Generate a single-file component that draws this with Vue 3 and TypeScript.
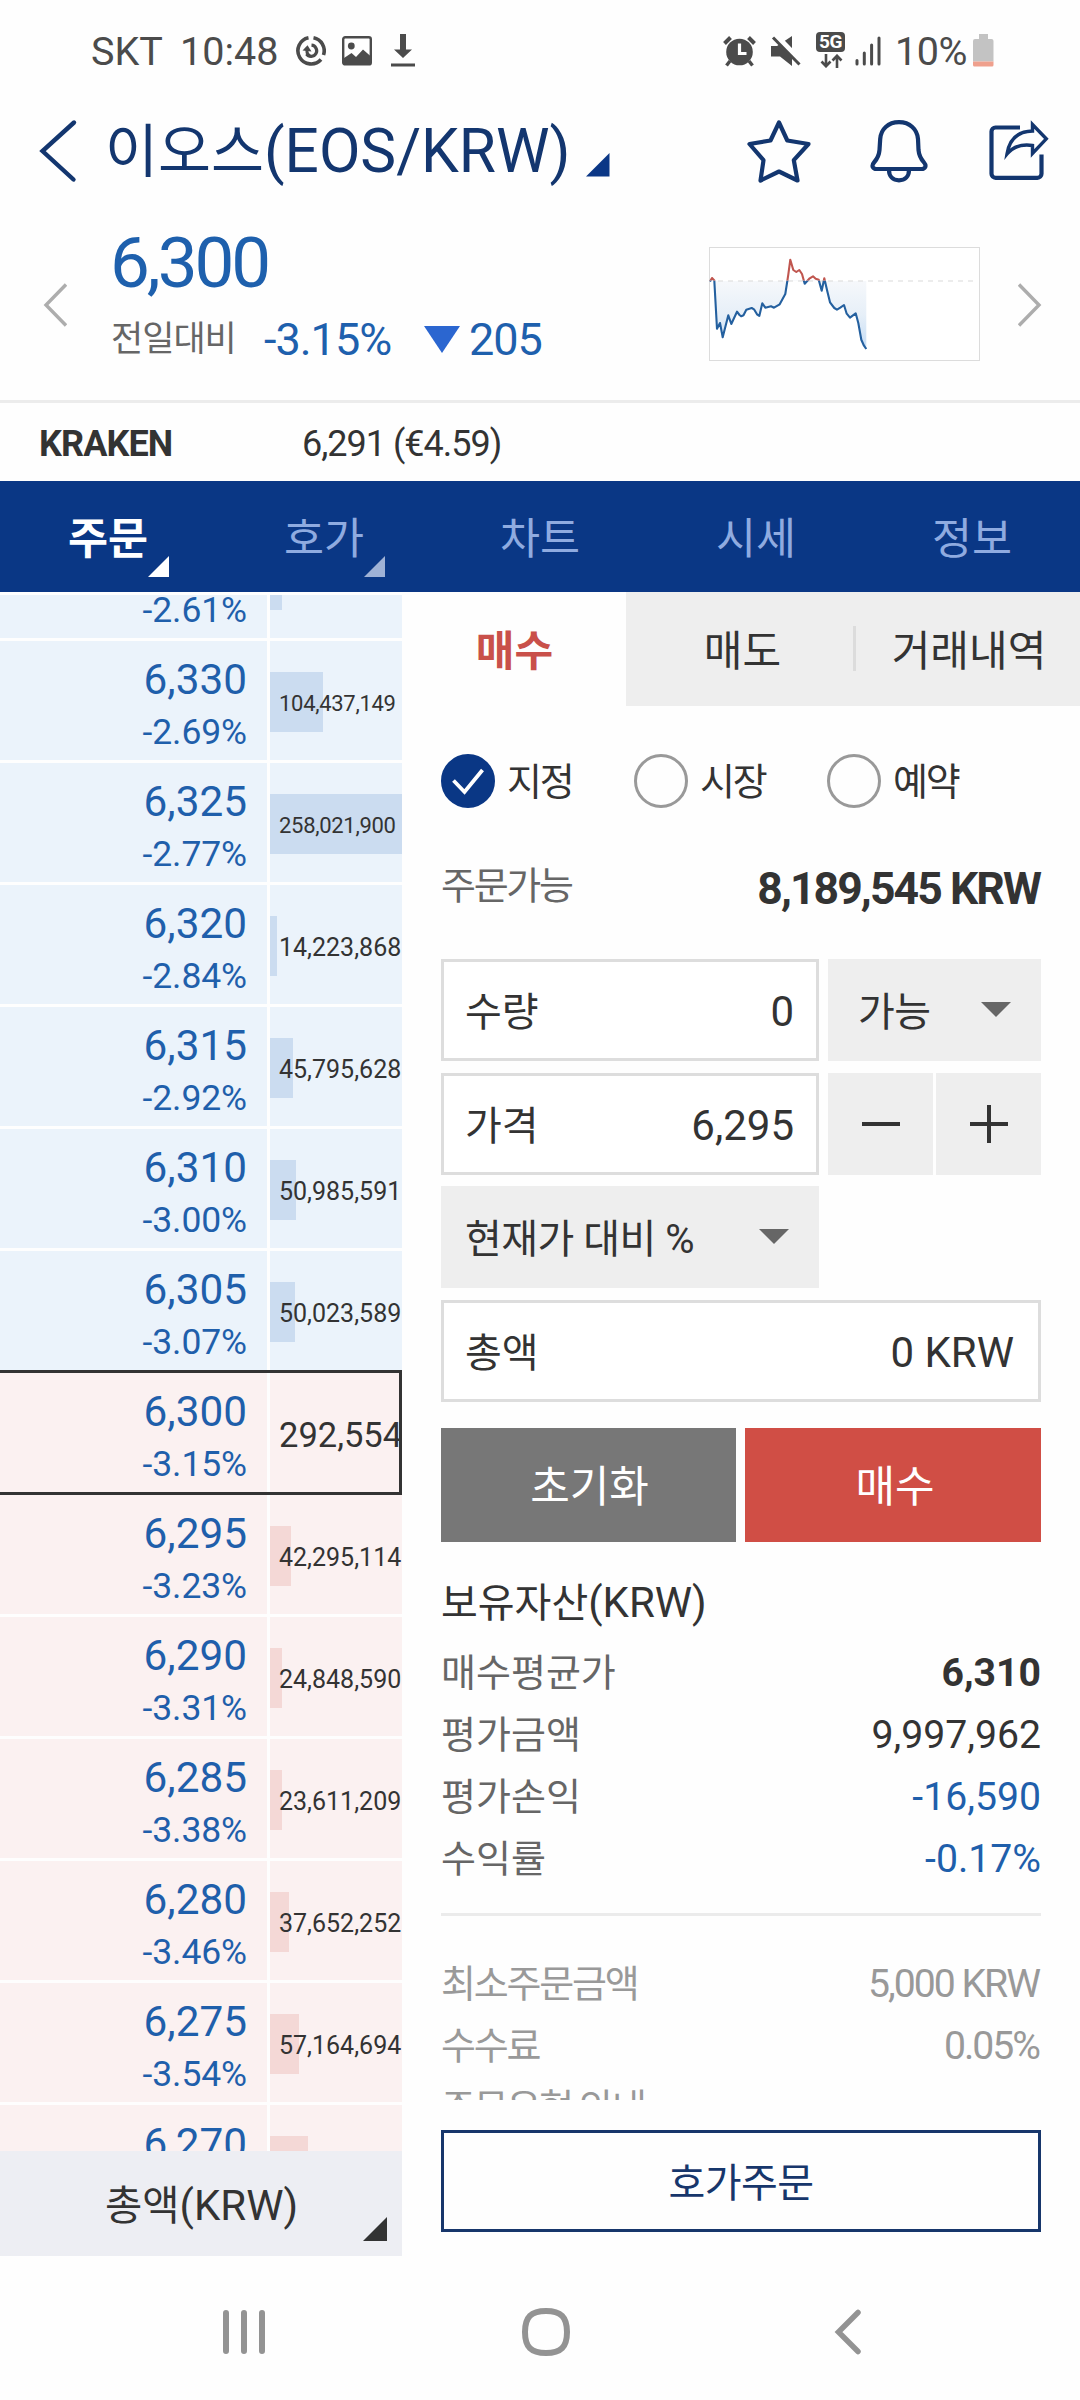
<script setup lang="ts">
interface Level {
  price?: string
  rate?: string
  volume: number
  label?: boolean
  last?: boolean
  side: 'ask' | 'bid'
}

const levels: Level[] = [
  { rate: '-2.61%', volume: 23900000, label: false, side: 'ask' },
  { price: '6,330', rate: '-2.69%', volume: 104437149, side: 'ask' },
  { price: '6,325', rate: '-2.77%', volume: 258021900, side: 'ask' },
  { price: '6,320', rate: '-2.84%', volume: 14223868, side: 'ask' },
  { price: '6,315', rate: '-2.92%', volume: 45795628, side: 'ask' },
  { price: '6,310', rate: '-3.00%', volume: 50985591, side: 'ask' },
  { price: '6,305', rate: '-3.07%', volume: 50023589, side: 'ask' },
  { price: '6,300', rate: '-3.15%', volume: 292554, last: true, side: 'bid' },
  { price: '6,295', rate: '-3.23%', volume: 42295114, side: 'bid' },
  { price: '6,290', rate: '-3.31%', volume: 24848590, side: 'bid' },
  { price: '6,285', rate: '-3.38%', volume: 23611209, side: 'bid' },
  { price: '6,280', rate: '-3.46%', volume: 37652252, side: 'bid' },
  { price: '6,275', rate: '-3.54%', volume: 57164694, side: 'bid' },
  { price: '6,270', volume: 75300000, label: false, side: 'bid' },
]
const maxVolume = 258021900
const barWidth = (l: Level) => `${Math.floor((l.volume / maxVolume) * 132)}px`
const fmt = (n: number) => n.toLocaleString('en-US')

const mainTabs = [
  { label: '주문', mark: true, active: true },
  { label: '호가', mark: true, active: false },
  { label: '차트', mark: false, active: false },
  { label: '시세', mark: false, active: false },
  { label: '정보', mark: false, active: false },
]

const orderTypes = ['지정', '시장', '예약']

const assets = [
  { label: '매수평균가', value: '6,310', cls: 'bold' },
  { label: '평가금액', value: '9,997,962', cls: '' },
  { label: '평가손익', value: '-16,590', cls: 'down' },
  { label: '수익률', value: '-0.17%', cls: 'down' },
]
const notes = [
  { label: '최소주문금액', value: '5,000 KRW' },
  { label: '수수료', value: '0.05%' },
  { label: '주문유형 안내', value: '' },
]

const points: [number, number][] = [
  [1, 34.5], [3, 31], [5.3, 33.5], [8, 81.7], [11, 76], [13.7, 90.3], [19.3, 68.3], [22.3, 77],
  [28, 64.7], [30.5, 68], [32.3, 69.3], [34.5, 68.3], [37.3, 62.7], [42.7, 61], [45, 62.3], [48, 67.3], [50.3, 69],
  [53.3, 56.3], [56.3, 60.7], [62, 59.3], [65, 60.7], [70.7, 57.3], [76.3, 47], [79.3, 27.7],
  [81.3, 12.7], [84.3, 23], [87.3, 25], [90.3, 23], [93, 27], [95.7, 36.7], [100.7, 31.3],
  [104, 29.3], [106.7, 31.7], [109.7, 32.7], [112.7, 43.7], [115.3, 31.3], [118.3, 44.3],
  [121, 55.3], [125.3, 61], [128, 62.7], [131.3, 60.7], [135, 58], [137.7, 66.7], [141, 70.7],
  [146.7, 66.3], [149.3, 76], [152.3, 92.7], [155, 98.7], [157.3, 102],
]
const line = 'M' + points.map((p) => p.join(' ')).join('L')
const area = `${line}L157.3 34L1 34Z`
</script>

<template>
  <div class="screen">
    <div class="status">
      <span class="carrier">SKT</span>
      <span class="clock">10:48</span>
      <svg class="s1" width="30" height="32" viewBox="0 0 30 32" fill="none" stroke="#4b4b4b">
        <path d="M17.5 2.8A13.2 13.2 0 0 1 27.5 20M25 24.5A13.2 13.2 0 1 1 12.5 2.8" stroke-width="3.6" />
        <path d="M15.5 10.2A5.6 5.6 0 1 1 10.5 19" stroke-width="3.2" />
        <path d="M6.5 15.5l5-5.2 4 6.2z" fill="#4b4b4b" stroke="none" />
        <path d="M11 14.5v2.5a4.6 4.6 0 0 0 3 3.8" stroke-width="3" />
      </svg>
      <svg class="s2" width="30" height="30" viewBox="0 0 30 30">
        <rect x="1.2" y="1.2" width="27.6" height="27.2" rx="2" fill="none" stroke="#4b4b4b" stroke-width="2.4" />
        <circle cx="9.3" cy="10" r="3.4" fill="#4b4b4b" />
        <path d="M2 22l7.5-5 4.5 4 7-7.5 8 7V29H2z" fill="#4b4b4b" />
      </svg>
      <svg class="s3" width="24" height="33" viewBox="0 0 24 33" fill="#4b4b4b">
        <path d="M9 0h6v15.500h6L12 24 3 15.500h6zM0 29.500h24v3H0z" />
      </svg>
      <div class="status-right">
        <svg width="33" height="32" viewBox="0 0 33 32">
          <circle cx="16.500" cy="17" r="13.300" fill="#4b4b4b" />
          <path d="M1.500 8.500l6-6M31.500 8.500l-6-6" stroke="#4b4b4b" stroke-width="4" />
          <path d="M7 26l-3.500 4.500M26 26l3.500 4.500" stroke="#4b4b4b" stroke-width="3.400" />
          <path d="M16.500 8.500v10h7" fill="none" stroke="#fff" stroke-width="3.200" />
        </svg>
        <svg class="g15" width="30" height="32" viewBox="0 0 30 32">
          <path d="M0 11h6l15-10v30L9 21.500H0z" fill="#4b4b4b" />
          <path d="M3.500 0l27 28" stroke="#fff" stroke-width="7" />
          <path d="M2 2.500l26.500 27" stroke="#4b4b4b" stroke-width="3" />
        </svg>
        <div class="net">
          <span class="fiveg">5G</span>
          <svg width="24" height="14" viewBox="0 0 24 14" fill="none" stroke="#4b4b4b" stroke-width="2.600">
            <path d="M7 0v12M2.500 7.500L7 12.200l4.500-4.700M18 14V2M13.500 6.500L18 1.800l4.500 4.700" />
          </svg>
        </div>
        <svg class="g11" width="27" height="30" viewBox="0 0 27 30" stroke="#4b4b4b" stroke-width="3" stroke-linecap="round">
          <path d="M2 24.500v3.500M9.300 17v11M16.600 9v19M24 2v26" />
        </svg>
        <span class="pct">10%</span>
        <svg width="21" height="33" viewBox="0 0 21 33">
          <path d="M6 0h9v5h3.500a2 2 0 0 1 2 2v20.500H0V7a2 2 0 0 1 2-2h4z" fill="#c3c3c3" />
          <path d="M0 27.500h20.500V31q0 1.500-1.500 1.500H1.500Q0 32.500 0 31z" fill="#efa08d" />
        </svg>
      </div>
    </div>

    <header class="head">
      <svg class="back" width="40" height="64" viewBox="0 0 40 64" fill="none" stroke="#13366f" stroke-width="4.400">
        <path d="M36 3.500L4.500 32 35.500 60.500" stroke-linecap="round" />
      </svg>
      <h1><span class="ko">이오스</span>(EOS/KRW)</h1>
      <svg class="htri" width="24" height="24" viewBox="0 0 24 24"><path d="M23.500 0v23.500H0z" fill="#0b3786" /></svg>
      <svg class="star" width="64" height="64" viewBox="0 0 64 64" fill="none" stroke="#13366f" stroke-width="4.200" stroke-linejoin="round">
        <path d="M32 3.500L40.300 21.500 61.500 25 46.800 41.200 50.500 61.500 32 52.500 13.500 61.500 16.500 41.200 2.500 25 23.500 21.500z" />
      </svg>
      <svg class="bell" width="58" height="64" viewBox="0 0 58 64" fill="none" stroke="#13366f" stroke-width="4.200" stroke-linejoin="round">
        <path d="M29 3.200C18 3.200 10.800 10.500 10.200 20L9.500 31c-.4 5.500-2 8.500-5.500 12.500C1 47 3 50 6.500 50h45c3.500 0 5.500-3 2.500-6.500C50.500 39.500 49 36.500 48.500 31L48 20C47.200 10.500 40 3.200 29 3.200z" />
        <path d="M19 51c0 6.500 4 10.300 10 10.300S39 57.500 39 51" />
      </svg>
      <svg class="share" width="60" height="64" viewBox="0 0 60 64" fill="none" stroke="#13366f" stroke-width="4.200">
        <path d="M31 8.500H6.500a4 4 0 0 0-4 4v42.300a4 4 0 0 0 4 4h42a4 4 0 0 0 4-4V35.500" />
        <path d="M18 35C20.500 19.500 29 12.300 43.500 12V5.500L57.300 19.800 43.500 34.500V26.500C31.500 24.800 24 27.500 18 35z" stroke-width="3.400" />
      </svg>
    </header>

    <section class="quote">
      <svg class="prev" width="24" height="44" viewBox="0 0 24 44" fill="none" stroke="#adadad" stroke-width="3.400"><path d="M23 1.500L3 22l20 20.500" /></svg>
      <div class="price-block">
        <div class="price">6,300</div>
        <div class="diff">
          <span class="lbl">전일대비</span>
          <span class="chg">-3.15%</span>
          <svg width="36" height="27" viewBox="0 0 36 27"><path d="M0 0h36L18 27z" fill="#2b66d0" /></svg>
          <span class="amt">205</span>
        </div>
      </div>
      <svg class="spark" width="271" height="114" viewBox="0 0 271 114">
        <defs>
          <linearGradient id="fade" x1="0" y1="34" x2="0" y2="102" gradientUnits="userSpaceOnUse">
            <stop offset="0" stop-color="#f6f8fb" />
            <stop offset=".5" stop-color="#e6eff8" />
            <stop offset="1" stop-color="#c4dcf5" />
          </linearGradient>
          <clipPath id="up"><rect width="271" height="33.500" /></clipPath>
          <clipPath id="dn"><rect y="33.500" width="271" height="80" /></clipPath>
        </defs>
        <rect x=".5" y=".5" width="270" height="113" fill="#fff" stroke="#dcdcdc" />
        <path :d="area" fill="url(#fade)" clip-path="url(#dn)" />
        <path d="M9 34H266" stroke="#dadada" stroke-width="1.200" stroke-dasharray="5 5" />
        <path :d="line" fill="none" stroke="#24609f" stroke-width="2.100" stroke-linejoin="round" clip-path="url(#dn)" />
        <path :d="line" fill="none" stroke="#c0564f" stroke-width="2.100" stroke-linejoin="round" clip-path="url(#up)" />
      </svg>
      <svg class="next" width="24" height="44" viewBox="0 0 24 44" fill="none" stroke="#adadad" stroke-width="3.400"><path d="M1 1.500L21 22 1 42.500" /></svg>
    </section>

    <section class="exchange">
      <b>KRAKEN</b>
      <span>6,291 (€4.59)</span>
    </section>

    <nav class="tabs">
      <div v-for="t in mainTabs" :key="t.label" class="tab" :class="{ on: t.active }">
        {{ t.label }}
        <svg v-if="t.mark" class="mark" width="21" height="21" viewBox="0 0 21 21"><path d="M21 0v21H0z" :fill="t.active ? '#fff' : '#9fb2d6'" /></svg>
      </div>
    </nav>

    <main>
      <aside class="book">
        <div class="levels">
          <div v-for="(l, i) in levels" :key="i" class="level" :class="[l.side, { last: l.last }]">
            <div class="cell pr">
              <span class="p">{{ l.price }}</span>
              <span class="r">{{ l.rate }}</span>
            </div>
            <div class="cell vol">
              <i v-if="!l.last" class="bar" :style="{ width: barWidth(l) }"></i>
              <span v-if="l.label !== false" class="v" :class="{ small: l.volume >= 1e8 }">{{ fmt(l.volume) }}</span>
            </div>
          </div>
        </div>
        <div class="unit">
          <span><span class="ko">총액</span>(KRW)</span>
          <svg width="24" height="24" viewBox="0 0 24 24"><path d="M24 0v24H0z" fill="#333" /></svg>
        </div>
      </aside>

      <section class="panel">
        <div class="scroll">
          <div class="side-tabs">
            <div class="buy">매수</div>
            <div class="sell">매도</div>
            <div class="hist">거래내역</div>
          </div>

          <div class="types">
            <div v-for="(o, i) in orderTypes" :key="o" class="type">
              <span class="radio" :class="{ on: i === 0 }">
                <svg v-if="i === 0" width="32" height="32" viewBox="0 0 32 32" fill="none" stroke="#fff" stroke-width="3.800"><path d="M1.500 15.500L12.500 27 30.500 5" /></svg>
              </span>
              <span>{{ o }}</span>
            </div>
          </div>

          <div class="avail"><span>주문가능</span><b>8,189,545 KRW</b></div>

          <div class="form">
            <div class="row">
              <div class="field half"><span>수량</span><em>0</em></div>
              <div class="pick qty"><span>가능</span><i class="caret"></i></div>
            </div>
            <div class="row">
              <div class="field half"><span>가격</span><em>6,295</em></div>
              <div class="step"><i class="h"></i></div>
              <div class="step"><svg width="38" height="38" viewBox="0 0 38 38"><path d="M0 19h38M19 0v38" stroke="#333" stroke-width="4" /></svg></div>
            </div>
            <div class="row">
              <div class="pick half"><span>현재가 대비 %</span><i class="caret"></i></div>
            </div>
            <div class="row">
              <div class="field full"><span>총액</span><em>0 KRW</em></div>
            </div>
          </div>

          <div class="actions">
            <div class="reset">초기화</div>
            <div class="submit">매수</div>
          </div>

          <h2><span class="ko">보유자산</span>(KRW)</h2>
          <div v-for="a in assets" :key="a.label" class="kv"><span>{{ a.label }}</span><em :class="a.cls">{{ a.value }}</em></div>
          <div class="rule"></div>
          <div v-for="n in notes" :key="n.label" class="kv note"><span>{{ n.label }}</span><em>{{ n.value }}</em></div>
        </div>
        <div class="quick">호가주문</div>
      </section>
    </main>

    <footer class="softkeys">
      <svg class="recent" width="42" height="46" viewBox="0 0 42 46" stroke="#939393" stroke-width="6" stroke-linecap="round"><path d="M3 4v38M21 4v38M39 4v38" /></svg>
      <svg class="home" width="48" height="48" viewBox="0 0 48 48" fill="none" stroke="#939393" stroke-width="6"><path d="M24 3C9 3 3 9 3 24s6 21 21 21 21-6 21-21S39 3 24 3z" /></svg>
      <svg class="return" width="28" height="46" viewBox="0 0 28 46" fill="none" stroke="#939393" stroke-width="5.500" stroke-linecap="round"><path d="M24 3.500L4.500 23 24 42.500" /></svg>
    </footer>
  </div>
</template>

<style>
body { background: #fff; }
</style>

<style scoped>
.screen {
  width: 1080px;
  height: 2400px;
  overflow: hidden;
  background: #fefefe;
  color: #333;
  font-family: Roboto, "Noto Sans CJK KR", sans-serif;
  display: flex;
  flex-direction: column;
  white-space: nowrap;
}
.screen * { box-sizing: border-box; }
svg { display: block; flex: none; }
em, i { font-style: normal; }

.status {
  height: 100px;
  display: flex;
  align-items: center;
  padding: 1px 86px 0 91px;
  font-size: 39.500px;
  color: #4b4b4b;
  flex: none;
}
.carrier, .clock, .pct { padding-top: 2px; }
.carrier { width: 89px; }
.clock { width: 116px; }
.s2 { margin-left: 16px; }
.s3 { margin-left: 19px; }
.status-right { margin-left: auto; display: flex; align-items: center; }
.g15 { margin-left: 15px; }
.g11 { margin-left: 10px; }
.pct { width: 78px; margin-left: 13px; letter-spacing: -0.5px; }
.net { margin-left: 15px; width: 29px; display: flex; flex-direction: column; align-items: center; gap: 2px; margin-top: -2px; }
.fiveg {
  width: 29px;
  height: 20px;
  border-radius: 4px;
  background: #4b4b4b;
  color: #fff;
  font-size: 19px;
  line-height: 20px;
  font-weight: 700;
  text-align: center;
  letter-spacing: -0.5px;
}

.head { height: 102px; display: flex; align-items: center; padding-left: 38px; color: #13366f; flex: none; }
h1 { margin: 0 0 0 27px; padding-top: 3px; font-weight: 400; font-size: 60.300px; line-height: 102px; width: 481px; }
h1 .ko { font-size: 57.6px; }
.htri { margin-top: 27px; }
.star { margin-left: 137px; }
.bell { margin-left: 59px; }
.share { margin-left: 61px; }

.quote { height: 201px; border-bottom: 3px solid #ececec; display: flex; align-items: flex-start; color: #1e60ad; flex: none; }
.prev { margin: 81px 0 0 43px; }
.price-block { margin: 16px 0 0 43px; width: 599px; }
.price { font-size: 71px; line-height: 90px; letter-spacing: -3.100px; }
.diff { display: flex; align-items: center; font-size: 45px; line-height: 64px; letter-spacing: -1px; }
.diff svg { margin-top: -1px; }
.diff .lbl { font-size: 35px; color: #666; width: 154px; margin-top: -1px; padding-left: 1px; }
.diff .chg { width: 160px; }
.diff .amt { margin-left: 9px; }
.spark { margin-top: 45px; }
.next { margin: 81px 0 0 38px; }

.exchange { height: 78px; display: flex; align-items: center; font-size: 36px; padding: 4px 0 0 39px; flex: none; }
.exchange b { width: 263px; letter-spacing: -0.9px; }
.exchange span { letter-spacing: -1px; }

.tabs { height: 111px; background: #0a3785; display: flex; flex: none; }
.tab { flex: 1; position: relative; text-align: center; font-size: 43.500px; line-height: 118px; color: #8fabe0; }
.tab.on { color: #fff; font-weight: 700; }
.mark { position: absolute; left: 148px; top: 75px; }

main { height: 1664px; display: flex; flex: none; }
.book { width: 402px; display: flex; flex-direction: column; }
.levels { height: 1559px; border-top: 3px solid #fff; overflow: hidden; display: flex; flex-direction: column; justify-content: flex-start; }
.level { height: 119px; margin-bottom: 3px; display: flex; gap: 3px; flex: none; }
.level:first-child { margin-top: -76px; }
.level.ask .cell { background: #ebf3fb; }
.level.bid .cell { background: #fbf1f1; }
.level:has(+ .last) { margin-bottom: 0; }
.level.last { height: 125px; margin-bottom: 0; border: 3px solid #333; border-left: 0; }
.pr { width: 267px; padding: 14px 20px 0 0; display: flex; flex-direction: column; text-align: right; color: #1f5fab; }
.p { font-size: 42.300px; line-height: 50px; height: 50px; }
.r { font-size: 35.500px; line-height: 54px; letter-spacing: -0.100px; }
.vol { width: 132px; position: relative; display: flex; align-items: center; padding: 6px 0 0 9px; overflow: hidden; }
.last .vol { width: 129px; padding-top: 4px; }
.bar { position: absolute; left: 0; top: 31px; height: 60px; }
.ask .bar { background: #cbdcf0; }
.bid .bar { background: #f4d8d6; }
.v { position: relative; font-size: 25px; }
.v.small { font-size: 22px; letter-spacing: -0.3px; }
.last .v { font-size: 34.500px; }
.unit { height: 105px; background: #edeef3; font-size: 42px; line-height: 110px; text-align: center; position: relative; padding-left: 1px; }
.unit .ko { font-size: 40.500px; }
.unit svg { position: absolute; right: 15px; bottom: 15px; }

.panel { width: 678px; }
.scroll { height: 1508px; overflow: hidden; }
.side-tabs { height: 114px; display: flex; font-size: 42px; line-height: 120px; text-align: center; }
.buy { width: 224px; color: #c9504a; font-weight: 700; padding-left: 1px; }
.sell { width: 227px; background: #eee; padding-left: 6px; }
.hist { width: 227px; background: linear-gradient(#dcdcdc, #dcdcdc) 0 34px / 3px 45px no-repeat #eee; padding-left: 5px; }

.types { display: flex; padding: 48px 0 0 39px; }
.type { width: 193px; display: flex; align-items: center; font-size: 38px; letter-spacing: -2.300px; line-height: 58px; height: 54px; }
.type > span:last-child { margin-left: 12px; padding-top: 2px; }
.radio { width: 54px; height: 54px; border: 3px solid #999; border-radius: 50%; display: flex; align-items: center; justify-content: center; }
.radio.on { background: #0a3785; border-color: #0a3785; }

.avail { margin: 48px 39px 0; height: 64px; display: flex; justify-content: space-between; align-items: center; font-size: 38px; }
.avail span { color: #666; letter-spacing: -2.300px; margin-top: -11px; }
.avail b { font-size: 44.500px; letter-spacing: -1.900px; margin-right: 1px; padding-top: 1px; }

.form { margin: 39px 39px 0; display: flex; flex-direction: column; gap: 11.600px; }
.row { display: flex; height: 102px; }
.half { width: 378px; }
.full { width: 100%; }
.field { border: 3px solid #ddd; background: #fff; display: flex; justify-content: space-between; align-items: center; padding: 3px 22px 0; font-size: 40px; }
.field.full { padding-right: 24px; }
.field span, .pick span { margin-top: -5px; margin-left: -1px; }
.field em { font-size: 42px; }
.pick { background: #eee; display: flex; justify-content: space-between; align-items: center; font-size: 40px; padding: 3px 30px 0 25px; letter-spacing: -0.5px; }
.qty { width: 213px; margin-left: 9px; padding-left: 31px; }
.caret { border: 15px solid transparent; border-top-color: #666; border-bottom: 0; margin-top: -4px; }
.step { width: 105px; background: #eee; display: flex; align-items: center; justify-content: center; margin-left: 3px; }
.half + .step { margin-left: 9px; }
.step .h { width: 38px; height: 4px; background: #333; }

.actions { margin: 26px 39px 0; display: flex; gap: 9px; color: #fff; font-size: 43px; line-height: 119px; height: 114px; text-align: center; }
.reset { width: 295px; background: #777; padding-left: 2px; }
.submit { flex: 1; background: #d04e45; padding-left: 4px; }

h2 { margin: 28px 39px 2px; font-weight: 400; font-size: 42px; line-height: 66px; height: 68px; }
h2 .ko { font-size: 40px; }
.kv { margin: 0 39px; height: 62px; line-height: 62px; display: flex; justify-content: space-between; font-size: 38px; color: #666; padding-top: 2px; }
.kv em { color: #333; font-size: 39.200px; }
.kv .bold { font-weight: 700; }
.kv .down { color: #1f5fab; }
.rule { margin: 25px 39px 35px; height: 3px; background: #ebebeb; }
.note, .note em { color: #999; letter-spacing: -2px; }
.note span { letter-spacing: -2.200px; }
.note em { margin-right: 2px; }
.quick { margin: 30px 39px 0; height: 102px; border: 3px solid #17366b; color: #17366b; font-size: 40px; line-height: 101px; text-align: center; letter-spacing: -0.5px; }

.softkeys { flex: 1; display: flex; align-items: flex-start; padding: 52px 0 0 223px; }
.recent { margin-top: 1px; }
.home { margin-left: 257px; }
.return { margin-left: 264px; margin-top: 1px; }
</style>
